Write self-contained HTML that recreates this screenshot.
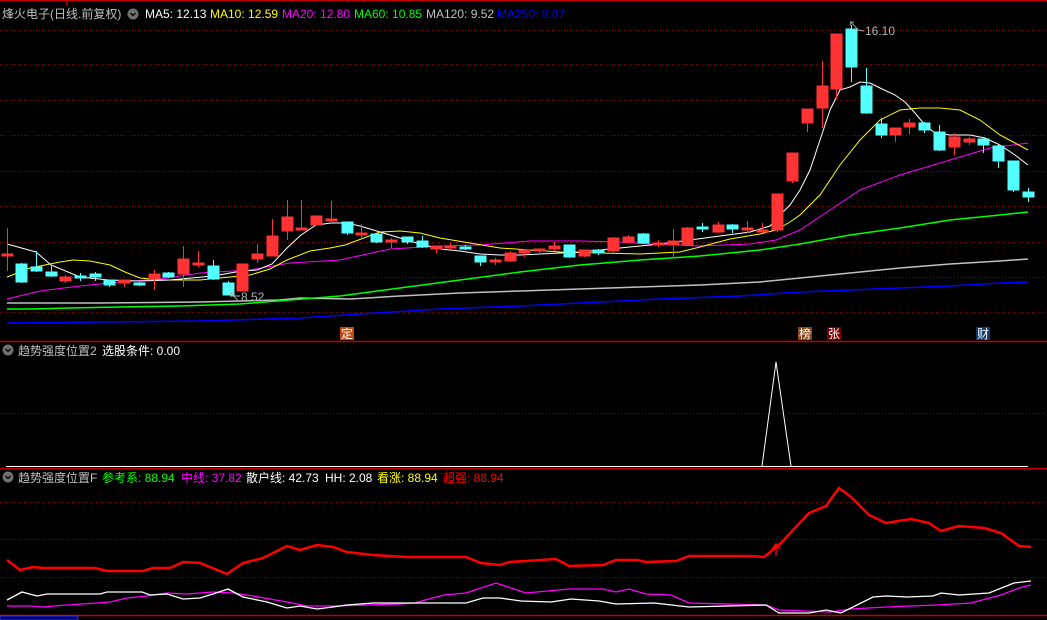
<!DOCTYPE html>
<html><head><meta charset="utf-8"><style>
html,body{margin:0;padding:0;background:#000;width:1047px;height:620px;overflow:hidden}
svg{display:block}
text{font-family:"Liberation Sans","Noto Sans CJK SC",sans-serif;font-size:12px}
</style></head><body>
<svg width="1047" height="620" viewBox="0 0 1047 620" xmlns="http://www.w3.org/2000/svg">
<rect width="1047" height="620" fill="#000"/>
<g stroke="#8b0000" stroke-width="1" stroke-dasharray="1 2">
<line x1="0" y1="30.5" x2="1047" y2="30.5"/><line x1="0" y1="64.5" x2="1047" y2="64.5"/><line x1="0" y1="100.5" x2="1047" y2="100.5"/><line x1="0" y1="135.5" x2="1047" y2="135.5"/><line x1="0" y1="171.5" x2="1047" y2="171.5"/><line x1="0" y1="206.5" x2="1047" y2="206.5"/><line x1="0" y1="242.5" x2="1047" y2="242.5"/><line x1="0" y1="277.5" x2="1047" y2="277.5"/><line x1="0" y1="312.5" x2="1047" y2="312.5"/>
<line x1="0" y1="413.5" x2="1047" y2="413.5"/>
<line x1="0" y1="502.5" x2="1047" y2="502.5"/><line x1="0" y1="539.5" x2="1047" y2="539.5"/><line x1="0" y1="577.5" x2="1047" y2="577.5"/>
</g>
<g stroke="#c00000" stroke-width="1.5">
<line x1="0" y1="0.5" x2="1047" y2="0.5"/><line x1="67" y1="0" x2="67" y2="5"/>
<line x1="0" y1="341.5" x2="1047" y2="341.5"/>
<line x1="0" y1="468.5" x2="1047" y2="468.5"/>
<line x1="0" y1="615.5" x2="1047" y2="615.5"/>
</g>
<rect x="0" y="616" width="78" height="4" fill="#000080" stroke="#6060ff" stroke-width="0.5"/>

<g fill="none" stroke-width="1">
<polyline stroke="#0000ff" stroke-width="1.5" points="7,323 100,322 200,321 300,318 360,314 440,309 520,306 600,302 660,299 740,296 800,292 850,290 900,288 950,286 1000,283 1028,282"/>
<polyline stroke="#c0c0c0" stroke-width="1.5" points="7,303 100,303 200,302 280,300 300,298 350,299 400,296 460,293 520,291 580,289 640,287 700,285 760,282 800,278 850,273 900,268 950,264 1000,261 1028,259"/>
<polyline stroke="#00ff00" stroke-width="1.5" points="7,309 30,309 70,308 120,307 180,306 240,304 290,300 340,296 400,288 460,280 520,272 580,265 640,260 700,256 760,250 800,244 850,235 900,228 950,220 1000,215 1028,212"/>
<polyline stroke="#ff00ff" points="7,299 40,291 80,286 120,282 160,279 200,273 250,270 290,263 340,260 390,249 440,246 480,245 530,241 580,241 620,242 650,244 700,246 750,244 776,240 800,230 830,210 860,190 900,175 950,160 990,148 1028,143"/>
<polyline stroke="#ffff00" points="7,277 30,268 60,262 73,260 90,261 110,265 125,272 140,278 160,280 200,280 230,277 250,275 270,269 287,260 310,251 330,248 345,245 380,232 400,231 420,233 440,238 470,243 500,248 530,250 560,252 600,253 640,254 660,253 680,252 700,247 730,239 760,234 776,230 790,222 800,215 820,195 840,165 860,140 880,120 900,110 920,108 940,108 960,110 980,120 1000,135 1015,143 1028,150"/>
<polyline stroke="#ffffff" points="7,244 36,252 51,265 80,277 109,280 140,281 170,280 213,276 230,273 242,271 257,270 272,264 287,248 301,235 316,225 331,223 346,223 360,226 380,232 400,238 420,244 440,249 460,251 480,254 500,255 520,255 540,254 560,253 580,252 600,250 620,248 640,246 660,244 690,240 720,236 750,232 770,226 780,215 790,205 800,190 810,170 820,140 830,110 840,90 850,87 860,82 870,83 880,88 895,95 905,102 915,113 925,125 935,133 950,135 970,135 985,138 1000,145 1015,155 1028,165"/>
</g>

<g stroke-width="1">
<g fill="#ff3333" stroke="#ff3333">
<line x1="7.5" y1="228" x2="7.5" y2="271"/><rect x="2" y="254" width="11" height="2"/>
<line x1="65.5" y1="275" x2="65.5" y2="283"/><rect x="60" y="277" width="11" height="4"/>
<line x1="124.5" y1="280" x2="124.5" y2="287"/><rect x="119" y="280" width="11" height="3"/>
<line x1="154.5" y1="270" x2="154.5" y2="290"/><rect x="149" y="274" width="11" height="5"/>
<line x1="183.5" y1="246" x2="183.5" y2="287"/><rect x="178" y="259" width="11" height="15"/>
<line x1="198.5" y1="251" x2="198.5" y2="267"/><rect x="193" y="263" width="11" height="2"/>
<rect x="237" y="264" width="11" height="27"/>
<line x1="257.5" y1="244" x2="257.5" y2="263"/><rect x="252" y="254" width="11" height="5"/>
<line x1="272.5" y1="219" x2="272.5" y2="256"/><rect x="267" y="236" width="11" height="20"/>
<line x1="287.5" y1="200" x2="287.5" y2="240"/><rect x="282" y="217" width="11" height="14"/>
<line x1="301.5" y1="200" x2="301.5" y2="230"/><rect x="296" y="228" width="11" height="2"/>
<rect x="311" y="216" width="11" height="9"/>
<line x1="331.5" y1="201" x2="331.5" y2="223"/><rect x="326" y="219" width="11" height="2"/>
<line x1="361.5" y1="224" x2="361.5" y2="238"/><rect x="356" y="233" width="11" height="2"/>
<line x1="391.5" y1="238" x2="391.5" y2="248"/><rect x="386" y="240" width="11" height="2"/>
<line x1="436.5" y1="246" x2="436.5" y2="253"/><rect x="431" y="246" width="11" height="3"/>
<line x1="450.5" y1="243" x2="450.5" y2="250"/><rect x="445" y="246" width="11" height="2"/>
<line x1="495.5" y1="258" x2="495.5" y2="265"/><rect x="490" y="260" width="11" height="2"/>
<line x1="510.5" y1="251" x2="510.5" y2="262"/><rect x="505" y="253" width="11" height="8"/>
<line x1="524.5" y1="249" x2="524.5" y2="257"/><rect x="519" y="250" width="11" height="3"/>
<line x1="539.5" y1="249" x2="539.5" y2="255"/><rect x="534" y="249" width="11" height="2"/>
<line x1="554.5" y1="242" x2="554.5" y2="251"/><rect x="549" y="246" width="11" height="3"/>
<line x1="584.5" y1="250" x2="584.5" y2="257"/><rect x="579" y="250" width="11" height="6"/>
<line x1="613.5" y1="237" x2="613.5" y2="252"/><rect x="608" y="238" width="11" height="13"/>
<line x1="628.5" y1="235" x2="628.5" y2="243"/><rect x="623" y="237" width="11" height="5"/>
<line x1="658.5" y1="240" x2="658.5" y2="247"/><rect x="653" y="243" width="11" height="2"/>
<line x1="673.5" y1="229" x2="673.5" y2="258"/><rect x="668" y="241" width="11" height="4"/>
<line x1="687.5" y1="227" x2="687.5" y2="246"/><rect x="682" y="228" width="11" height="17"/>
<line x1="718.5" y1="222" x2="718.5" y2="233"/><rect x="713" y="225" width="11" height="7"/>
<line x1="747.5" y1="221" x2="747.5" y2="233"/><rect x="742" y="228" width="11" height="2"/>
<line x1="762.5" y1="223" x2="762.5" y2="232"/><rect x="757" y="230" width="11" height="2"/>
<line x1="777.5" y1="194" x2="777.5" y2="232"/><rect x="772" y="194" width="11" height="36"/>
<line x1="792.5" y1="153" x2="792.5" y2="183"/><rect x="787" y="153" width="11" height="28"/>
<line x1="807.5" y1="109" x2="807.5" y2="132"/><rect x="802" y="109" width="11" height="14"/>
<line x1="822.5" y1="61" x2="822.5" y2="128"/><rect x="817" y="86" width="11" height="22"/>
<line x1="836.5" y1="34" x2="836.5" y2="99"/><rect x="831" y="34" width="11" height="55"/>
<line x1="895.5" y1="128" x2="895.5" y2="142"/><rect x="890" y="128" width="11" height="7"/>
<line x1="909.5" y1="119" x2="909.5" y2="134"/><rect x="904" y="123" width="11" height="4"/>
<line x1="954.5" y1="133" x2="954.5" y2="155"/><rect x="949" y="137" width="11" height="10"/>
<line x1="969.5" y1="137" x2="969.5" y2="145"/><rect x="964" y="139" width="11" height="3"/>
</g>
<g fill="#54ffff" stroke="#54ffff">
<line x1="21.5" y1="263" x2="21.5" y2="283"/><rect x="16" y="264" width="11" height="18"/>
<line x1="36.5" y1="251" x2="36.5" y2="272"/><rect x="31" y="267" width="11" height="4"/>
<line x1="51.5" y1="266" x2="51.5" y2="277"/><rect x="46" y="272" width="11" height="4"/>
<line x1="80.5" y1="273" x2="80.5" y2="281"/><rect x="75" y="276" width="11" height="2"/>
<line x1="95.5" y1="272" x2="95.5" y2="281"/><rect x="90" y="274" width="11" height="3"/>
<line x1="109.5" y1="280" x2="109.5" y2="287"/><rect x="104" y="280" width="11" height="5"/>
<line x1="139.5" y1="282" x2="139.5" y2="286"/><rect x="134" y="283" width="11" height="2"/>
<line x1="168.5" y1="272" x2="168.5" y2="278"/><rect x="163" y="273" width="11" height="4"/>
<line x1="213.5" y1="260" x2="213.5" y2="280"/><rect x="208" y="266" width="11" height="13"/>
<line x1="228.5" y1="281" x2="228.5" y2="295"/><rect x="223" y="283" width="11" height="12"/>
<line x1="347.5" y1="222" x2="347.5" y2="235"/><rect x="342" y="222" width="11" height="11"/>
<line x1="376.5" y1="234" x2="376.5" y2="243"/><rect x="371" y="234" width="11" height="8"/>
<line x1="407.5" y1="237" x2="407.5" y2="244"/><rect x="402" y="237" width="11" height="5"/>
<line x1="422.5" y1="236" x2="422.5" y2="248"/><rect x="417" y="241" width="11" height="6"/>
<line x1="465.5" y1="245" x2="465.5" y2="250"/><rect x="460" y="247" width="11" height="2"/>
<line x1="480.5" y1="256" x2="480.5" y2="266"/><rect x="475" y="256" width="11" height="6"/>
<line x1="569.5" y1="245" x2="569.5" y2="258"/><rect x="564" y="245" width="11" height="12"/>
<line x1="598.5" y1="249" x2="598.5" y2="255"/><rect x="593" y="250" width="11" height="3"/>
<line x1="643.5" y1="233" x2="643.5" y2="244"/><rect x="638" y="234" width="11" height="9"/>
<line x1="702.5" y1="223" x2="702.5" y2="232"/><rect x="697" y="227" width="11" height="2"/>
<line x1="732.5" y1="224" x2="732.5" y2="233"/><rect x="727" y="225" width="11" height="4"/>
<line x1="851.5" y1="25" x2="851.5" y2="82"/><rect x="846" y="29" width="11" height="38"/>
<line x1="866.5" y1="68" x2="866.5" y2="114"/><rect x="861" y="86" width="11" height="27"/>
<line x1="881.5" y1="118" x2="881.5" y2="138"/><rect x="876" y="124" width="11" height="11"/>
<line x1="924.5" y1="122" x2="924.5" y2="133"/><rect x="919" y="123" width="11" height="7"/>
<line x1="939.5" y1="125" x2="939.5" y2="151"/><rect x="934" y="132" width="11" height="18"/>
<line x1="983.5" y1="139" x2="983.5" y2="153"/><rect x="978" y="139" width="11" height="6"/>
<line x1="998.5" y1="145" x2="998.5" y2="168"/><rect x="993" y="146" width="11" height="15"/>
<line x1="1013.5" y1="161" x2="1013.5" y2="192"/><rect x="1008" y="161" width="11" height="29"/>
<line x1="1028.5" y1="188" x2="1028.5" y2="202"/><rect x="1023" y="192" width="11" height="5"/>
</g>
</g>

<text x="228" y="301" fill="#b0b0b0" font-size="10">↖</text>
<line x1="231" y1="296" x2="240" y2="296" stroke="#b0b0b0"/>
<text x="241" y="301" fill="#b0b0b0">8.52</text>
<text x="848" y="30" fill="#b0b0b0" font-size="10">↖</text>
<line x1="852" y1="29" x2="864" y2="31" stroke="#b0b0b0"/>
<text x="865" y="35" fill="#b0b0b0">16.10</text>
<rect x="340" y="327" width="14" height="13" fill="#c04a10"/><text x="341" y="338" fill="#fff" font-size="12">定</text>
<rect x="798" y="327" width="14" height="13" fill="#8b4513"/><text x="799" y="338" fill="#fff" font-size="12">榜</text>
<rect x="827" y="327" width="14" height="13" fill="#7a0000"/><text x="828" y="338" fill="#fff" font-size="12">张</text>
<rect x="976" y="327" width="14" height="13" fill="#10386a"/><text x="977" y="338" fill="#fff" font-size="12">财</text>

<text x="2" y="18" fill="#c0c0c0" font-size="13">烽火电子(日线.前复权)</text>
<circle cx="133" cy="14" r="5.5" fill="#707070"/><path d="M130.5 13 L133 15.5 L135.5 13" stroke="#000" stroke-width="1.3" fill="none"/>
<text x="145" y="18" fill="#ffffff">MA5: 12.13</text>
<text x="210" y="18" fill="#ffff00">MA10: 12.59</text>
<text x="282" y="18" fill="#ff00ff">MA20: 12.80</text>
<text x="354" y="18" fill="#00ff00">MA60: 10.85</text>
<text x="426" y="18" fill="#c0c0c0">MA120: 9.52</text>
<text x="497" y="18" fill="#0000ff">MA250: 8.87</text>

<circle cx="8" cy="350" r="5.5" fill="#707070"/><path d="M5.5 349 L8 351.5 L10.5 349" stroke="#000" stroke-width="1.3" fill="none"/>
<text x="18" y="355" fill="#c0c0c0" font-size="13">趋势强度位置2</text>
<text x="102" y="355" fill="#ffffff" font-size="12">选股条件: 0.00</text>
<line x1="6" y1="466.5" x2="1028" y2="466.5" stroke="#fff" stroke-width="1"/>
<polyline points="762,466 776,362 791,466" fill="none" stroke="#fff" stroke-width="1"/>

<circle cx="8" cy="477" r="5.5" fill="#707070"/><path d="M5.5 476 L8 478.5 L10.5 476" stroke="#000" stroke-width="1.3" fill="none"/>
<text x="18" y="482" fill="#c0c0c0" font-size="13">趋势强度位置F</text>
<text x="102" y="482" fill="#00ff00">参考系: 88.94</text>
<text x="181" y="482" fill="#ff00ff">中线: 37.82</text>
<text x="246" y="482" fill="#ffffff">散户线: 42.73</text>
<text x="325" y="482" fill="#ffffff">HH: 2.08</text>
<text x="377" y="482" fill="#ffff00">看涨: 88.94</text>
<text x="443" y="482" fill="#ff0000">超强: 88.94</text>

<polyline fill="none" stroke="#ff00ff" stroke-width="1.3" points="7,606 30,606 43,607 67,605 97,603 110,602 127,598 147,596 167,593 187,594 213,592 233,593 253,596 287,602 307,606 333,606 367,605 400,604 414,603 444,595 466,593 496,583 526,593 569,589 603,589 616,592 629,589 646,594 671,595 689,603 766,605 779,610 830,612 851,609 886,607 937,605 971,603 1001,595 1019,588 1031,585"/>
<polyline fill="none" stroke="#ffffff" stroke-width="1.3" points="7,600 22,592 37,596 47,594 100,594 107,592 142,592 150,595 167,594 183,599 200,598 213,594 228,589 243,597 267,602 287,608 300,606 317,609 333,607 347,605 373,603 400,603 466,603 483,598 500,598 521,601 551,602 571,599 599,601 616,604 654,603 689,607 766,605 779,613 809,613 826,610 841,613 873,597 886,596 907,597 933,596 941,593 959,595 989,593 1014,583 1031,581"/>
<polyline fill="none" stroke="#ff0000" stroke-width="2.5" points="7,560 20,570 33,567 43,568 95,568 107,571 143,571 153,568 170,568 183,562 200,563 227,574 243,563 263,558 287,546 300,550 317,545 333,547 347,552 373,555 406,557 466,557 481,563 500,565 509,562 526,561 556,559 569,566 603,565 616,560 637,560 646,562 676,561 689,556 749,556 764,557 779,545 809,513 826,506 839,488 851,497 869,515 886,523 911,519 929,523 941,531 959,526 984,528 1001,533 1019,546 1031,547"/>
<path d="M776 556 L776 545 M772 549 L776 544 L780 549" stroke="#ff0000" stroke-width="1.5" fill="none"/>
</svg>
</body></html>
